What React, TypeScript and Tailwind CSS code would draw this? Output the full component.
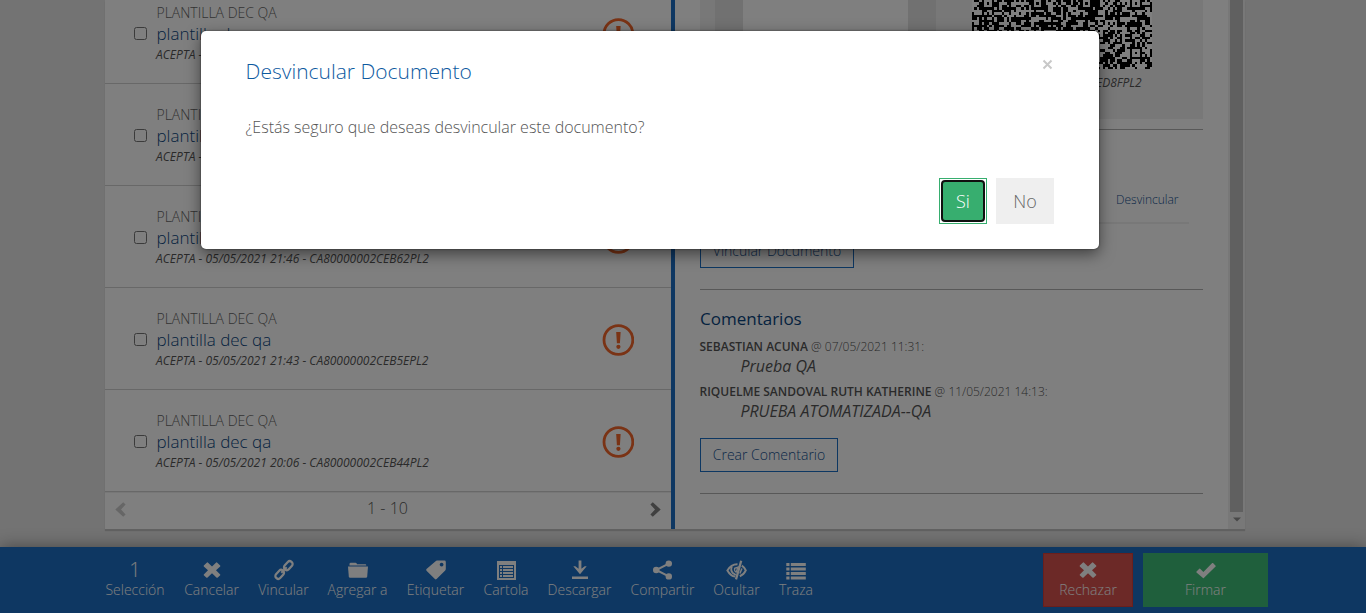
import React from 'react';

const ROWS = [
  { id: 'CA80000002CEB6APL2', date: '05/05/2021 21:52' },
  { id: 'CA80000002CEB66PL2', date: '05/05/2021 21:49' },
  { id: 'CA80000002CEB62PL2', date: '05/05/2021 21:46' },
  { id: 'CA80000002CEB5EPL2', date: '05/05/2021 21:43' },
  { id: 'CA80000002CEB44PL2', date: '05/05/2021 20:06' },
];

const QR_SIZE = 73;
const QR_ALIGN = [6, 26, 46, 66];

function qrPath() {
  let seed = 20210505;
  const next = () => {
    seed = (seed * 1103515245 + 12345) % 2147483648;
    return seed / 2147483648;
  };
  let d = '';
  for (let r = 0; r < QR_SIZE; r++) {
    for (let c = 0; c < QR_SIZE; c++) {
      let on = next() < 0.52;
      for (const ar of QR_ALIGN) {
        for (const ac of QR_ALIGN) {
          const ring = Math.max(Math.abs(r - ar), Math.abs(c - ac));
          if (ring <= 2) on = ring !== 1;
        }
      }
      if (on) d += `M${c} ${r}h1v1h-1z`;
    }
  }
  return d;
}

function QrCode() {
  return (
    <svg className="block h-[180px] w-[180px] bg-white" viewBox="0 0 73 73" shapeRendering="crispEdges">
      <path d={qrPath()} fill="#000" />
    </svg>
  );
}

function Alert() {
  return (
    <svg className="h-8 w-8" viewBox="0 0 32 32" fill="none">
      <circle cx="16.4" cy="16" r="14.4" stroke="#f4662a" strokeWidth="2.8" />
      <path d="M14.200 8h4.400l-.7 11.2h-3z" fill="#f4662a" />
      <circle cx="16.4" cy="22.8" r="2.1" fill="#f4662a" />
    </svg>
  );
}

const icons = {
  remove: <path d="M1.8 5.6 5 2.4q.4-.3.8 0L10 6.6l4.200-4.200q.4-.3.8 0l3.200 3.200q.3.4 0 .8L14 10.200l4.200 4.200q.3.4 0 .8l-2.700 2.500q-.4.3-.8 0L10 13.300l-4.700 4.400q-.4.3-.8 0l-2.700-2.500q-.3-.4 0-.8L6 10.200 1.800 6.400q-.3-.4 0-.8z" />,
  link: (
    <g fill="none" stroke="currentColor" strokeWidth="2.200">
      <rect x="-5" y="-2.800" width="10" height="5.600" rx="2.600" transform="translate(14.300 5.700) rotate(-48)" />
      <rect x="-5" y="-2.800" width="10" height="5.600" rx="2.600" transform="translate(5.700 14.300) rotate(-48)" />
      <path d="M7.300 12.700 12.700 7.300" strokeWidth="2" />
    </g>
  ),
  folder: (
    <>
      <path d="M1.500 5.500V4q0-1.300 1.300-1.300h4.700q.8 0 1.200.7l.4.800h8.200q1 0 1 1.300z" />
      <path d="M0 6.500h20l-.8 10q-.1 1.200-1.300 1.200H2.100q-1.200 0-1.300-1.200z" />
    </>
  ),
  tag: <path fillRule="evenodd" d="M11 .6h7.500q1.300 0 1.300 1.300V9q0 .8-.6 1.400L10.600 19q-.9.800-1.700 0L.5 10.800q-.7-.9 0-1.700L9.600 1.200q.6-.6 1.400-.6zM15.600 2.700a1.900 1.900 0 1 0 .01 0z" />,
  listAlt: <path fillRule="evenodd" d="M1 1h19v19H1zM3 5v13h15V5zM4 6h2v2H4zm3 0h10v2H7zM4 9h2v2H4zm3 0h10v2H7zM4 12h2v2H4zm3 0h10v2H7zM4 15h2v2H4zm3 0h10v2H7z" />,
  save: <path d="M8.600.5h2.800v8.200l3.300-2.400h2L10 14.200 3.300 6.300h2l3.300 2.400zM2 16.500h16V19H2z" />,
  share: (
    <>
      <circle cx="3.200" cy="10" r="3.200" />
      <circle cx="15.800" cy="3.600" r="3.200" />
      <circle cx="15.800" cy="16.400" r="3.200" />
      <path d="M15.800 3.600 3.200 10l12.600 6.400" fill="none" stroke="currentColor" strokeWidth="2" />
    </>
  ),
  eyeClose: (
    <g fill="none" stroke="currentColor" transform="translate(-.5 0)">
      <path d="M8.700 16.600Q4.200 16 .9 10.400 4.700 4 11 4.200" strokeWidth="2" />
      <path d="M15.300 5.600q2.600 1.700 4 4.800-2 4.300-6 5.800" strokeWidth="2" />
      <path d="M5.300 6.700q-1.600 3.700 1 6.300l3 2" strokeWidth="1.900" />
      <path d="M8.100 8.300q-.4 3 1.500 3.800l2-5z" strokeWidth="1.300" />
      <path d="M14.700.8 9.500 19.400" strokeWidth="2.300" />
      <path d="m15.400 8.500-2 5" strokeWidth="1.500" />
    </g>
  ),
  list: <path d="M.3 3h3.200v3H.3zm4.500 0h15v3h-15zM.3 7.500h3.200v3H.3zm4.500 0h15v3h-15zM.3 12h3.200v3H.3zm4.500 0h15v3h-15zM.3 16.500h3.200v3H.3zm4.500 0h15v3h-15z" />,
  ok: <path d="M.5 11.600 3.300 8.800q.4-.4.8 0l3.300 3.300 8.800-9q.4-.4.8 0L19.600 5.700q.4.400 0 .8L7.800 18q-.4.400-.8 0L.5 12.400q-.3-.4 0-.8z" />,
};

type IconName = keyof typeof icons;

function Icon({ name }: { name: IconName }) {
  return (
    <svg className="block h-5 w-5 overflow-visible" viewBox="0 0 20 20" fill="currentColor">
      {icons[name]}
    </svg>
  );
}

const ACTIONS: { label: string; icon?: IconName; width: string }[] = [
  { label: 'Selección', width: 'w-[78px]' },
  { label: 'Cancelar', icon: 'remove', width: 'w-[75px]' },
  { label: 'Vincular', icon: 'link', width: 'w-[69px]' },
  { label: 'Agregar a', icon: 'folder', width: 'w-[79px]' },
  { label: 'Etiquetar', icon: 'tag', width: 'w-[77px]' },
  { label: 'Cartola', icon: 'listAlt', width: 'w-[64px]' },
  { label: 'Descargar', icon: 'save', width: 'w-[83px]' },
  { label: 'Compartir', icon: 'share', width: 'w-[83px]' },
  { label: 'Ocultar', icon: 'eyeClose', width: 'w-[65px]' },
  { label: 'Traza', icon: 'list', width: 'w-[54px]' },
];

function Chevron({ flip, className }: { flip?: boolean; className: string }) {
  return (
    <svg className={className} viewBox="0 0 11 15" fill="currentColor">
      <path d={flip ? 'M0.400 2.600 2.800.2 10.700 7.500 2.800 14.800.4 12.400 5 7.500z' : 'M10.600 2.600 8.200.2.3 7.500 8.200 14.800l2.400-2.400L6 7.500z'} />
    </svg>
  );
}

function DocumentList() {
  return (
    <div className="flex h-[529px] w-[566px] flex-col overflow-hidden">
      <div className="-mt-[18px] flex flex-col">
        {ROWS.map((row) => (
          <div key={row.id} className="flex h-[102px] items-center border-b border-[#d0d0d0] pl-[29px] pr-[37px] pt-[2px]">
            <div className="mr-[9.5px] h-[13px] w-[13px] rounded-[2.5px] border border-[#767676] bg-white" />
            <div className="flex flex-1 flex-col">
              <span className="h-[21px] text-[14px] leading-[22px] text-[#666]">PLANTILLA DEC QA</span>
              <span className="h-[22px] text-[17px] leading-[22px] text-[#0a4580]">plantilla dec qa</span>
              <span className="-ml-[0.5px] h-[20px] text-[12px] font-normal italic leading-[20px] text-[#555]">
                ACEPTA - {row.date} - {row.id}
              </span>
            </div>
            <Alert />
          </div>
        ))}
      </div>
      <div className="flex h-[37px] items-center justify-between border-t border-[#eee] pl-[10px] pr-[10px] pb-[3px] text-[16px] text-[#555]">
        <Chevron className="h-[15px] w-[11px] text-[#ccc]" />
        <span className="-ml-px -mt-[3px]">1 - 10</span>
        <Chevron flip className="h-[15px] w-[11px] text-[#808080]" />
      </div>
    </div>
  );
}

function Comment({ author, date, text }: { author: string; date: string; text: string }) {
  return (
    <div className="h-[45px]">
      <div className="-ml-[0.5px] h-[18px] pt-px text-[12px] leading-[17px] text-[#555]">
        <span className="font-semibold">{author}</span> @ {date}:
      </div>
      <div className="h-[22px] pl-[40.4px] text-[16px] font-normal italic leading-[22px] text-[#555]">{text}</div>
    </div>
  );
}

function Details() {
  return (
    <div className="flex h-[529px] w-[553px] flex-col pl-[25px] pr-[25px]">
      <div className="flex h-[119px] bg-[#f0f0f0] pl-[15px]">
        <div className="w-[28px] bg-[#e2e2e2]" />
        <div className="w-[165px] bg-white" />
        <div className="w-[28px] bg-[#e2e2e2]" />
        <div className="flex flex-1 flex-col items-center overflow-hidden pr-[15px]">
          <div className="-mt-[111px]">
            <QrCode />
          </div>
          <span className="mr-[3px] mt-[5px] text-[12px] font-normal italic leading-[18px] text-[#555]">Código: CA80000002CED8FPL2</span>
        </div>
      </div>
      <div className="mt-[10px] h-px shrink-0 bg-[#b0b0b0]" />
      <div className="mr-[14px] flex h-[94px] shrink-0 items-end justify-end border-b-2 border-[#f0f0f0] pb-[13px] pr-[10.5px]">
        <span className="text-[12px] leading-[18px] text-[#14508f]">Desvincular</span>
      </div>
      <div className="mt-[10px] flex h-[34px] w-[154px] shrink-0 items-center justify-center border border-[#1b6ec5] pb-[2px] text-[14px] text-[#14508f]">
        Vincular Documento
      </div>
      <div className="mt-[21px] h-px shrink-0 bg-[#b0b0b0]" />
      <h2 className="mt-[18px] h-[22px] shrink-0 text-[17px] font-normal leading-[22px] text-[#0a4580]">Comentarios</h2>
      <div className="mt-[7px] flex shrink-0 flex-col">
        <Comment author="SEBASTIAN ACUNA" date="07/05/2021 11:31" text="Prueba QA" />
        <Comment author="RIQUELME SANDOVAL RUTH KATHERINE" date="11/05/2021 14:13" text="PRUEBA ATOMATIZADA--QA" />
      </div>
      <div className="mt-[11px] flex h-[34px] w-[138px] shrink-0 items-center justify-center border border-[#1b6ec5] pb-[2px] text-[14px] text-[#14508f]">
        Crear Comentario
      </div>
      <div className="mt-[21px] h-px shrink-0 bg-[#b0b0b0]" />
    </div>
  );
}

function Scrollbar() {
  return (
    <div className="flex h-[529px] w-[17px] flex-col items-center bg-[#f1f1f1]">
      <div className="h-[512px] w-[13px] bg-[#c1c1c1]" />
      <svg className="mt-[5px] h-[5px] w-[8px]" viewBox="0 0 8 5">
        <path d="M0 .5h8L4 4.500z" fill="#909090" />
      </svg>
    </div>
  );
}

function Toolbar() {
  return (
    <div className="flex h-[66px] bg-[#1c6ec4] pl-[96px] pr-[98px] text-[14px] text-white shadow-[0_0_16px_rgba(0,0,0,0.4)]">
      <div className="flex pt-[13px]">
        {ACTIONS.map((a) => (
          <div key={a.label} className={`flex flex-col items-center ${a.width}`}>
            {a.icon ? <Icon name={a.icon} /> : <span className="h-5 text-[20px] leading-[20px]">1</span>}
            <span className="whitespace-nowrap leading-[20px]">{a.label}</span>
          </div>
        ))}
      </div>
      <div className="ml-auto flex gap-[10px] pt-[6px]">
        <div className="flex h-[54px] w-[90px] flex-col items-center border border-[#d43f3a] bg-[#d9534f] pt-[6px]">
          <Icon name="remove" />
          <span className="leading-[20px]">Rechazar</span>
        </div>
        <div className="flex h-[54px] w-[125px] flex-col items-center bg-[#3fbf79] pt-[7px]">
          <Icon name="ok" />
          <span className="leading-[20px]">Firmar</span>
        </div>
      </div>
    </div>
  );
}

function ConfirmDialog() {
  return (
    <div className="absolute left-[201px] top-[31px] flex h-[218px] w-[898px] flex-col rounded-[5px] bg-white pl-[45px] pr-[45px] shadow-[0_5px_15px_rgba(0,0,0,0.5),0_0_2px_rgba(0,0,0,0.6)]">
      <div className="flex h-[80px] items-start justify-between pt-[26px]">
        <h1 className="-ml-[0.4px] text-[21px] font-light leading-[28px] text-[#0d5a9f]">Desvincular Documento</h1>
        <svg className="mr-px mt-[2px] h-[11px] w-[11px]" viewBox="0 0 11 11">
          <path d="m1.500 1.500 8 8m0-8-8 8" stroke="#c8c8c8" strokeWidth="2" />
        </svg>
      </div>
      <p className="-ml-[0.4px] h-[67px] pt-[5px] text-[16px] leading-[22px] text-[#555]">¿Estás seguro que deseas desvincular este documento?</p>
      <div className="flex h-[46px] justify-end gap-[9px] text-[18px]">
        <button className="flex w-[48px] border border-[#37ae6f] bg-white p-px font-light text-white">
          <span className="flex h-full w-full items-center justify-center rounded-[4px] border-2 border-[#101010] bg-[#37ae6f]">Si</span>
        </button>
        <button className="w-[58px] bg-[#efefef] font-light text-[#666]">No</button>
      </div>
    </div>
  );
}

export default function App() {
  return (
    <div className="relative flex h-[613px] w-[1366px] flex-col overflow-hidden bg-[#e6e6e6] font-['Open_Sans','Noto_Sans',sans-serif] font-light">
      <div className="mb-[18px] ml-[105px] flex h-[529px] w-[1140px] bg-white shadow-[0_2px_1px_rgba(0,0,0,0.15)]">
        <DocumentList />
        <div className="h-full w-[4px] bg-[#1c6ec4]" />
        <Details />
        <Scrollbar />
      </div>
      <Toolbar />
      <div className="absolute inset-0 bg-black/50" />
      <ConfirmDialog />
    </div>
  );
}
